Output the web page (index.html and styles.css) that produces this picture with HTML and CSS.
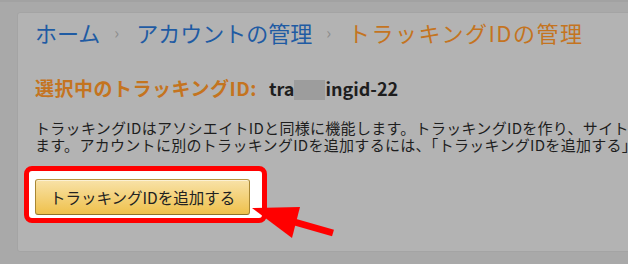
FILE: index.html
```html
<!DOCTYPE html>
<html lang="ja">
<head>
<meta charset="utf-8">
<title>トラッキングIDの管理</title>
<link rel="stylesheet" href="styles.css">
</head>
<body>
<div class="page">
  <div class="card">
    <nav class="crumbs">
      <a class="crumb link" href="#">ホーム</a>
      <span class="sep">›</span>
      <a class="crumb link" href="#">アカウントの管理</a>
      <span class="sep">›</span>
      <span class="crumb current">トラッキングIDの管理</span>
    </nav>
    <h2 class="selected">
      <span class="label">選択中のトラッキングID:</span>
      <span class="value">tra<span class="redact"></span>ingid-22</span>
    </h2>
    <p class="desc">トラッキングIDはアソシエイトIDと同様に機能します。トラッキングIDを作り、サイトやページごとのクリック数や売上を確認でき<br>ます。アカウントに別のトラッキングIDを追加するには、「トラッキングIDを追加する」をクリックしてください。</p>
    <div class="highlight">
      <button class="btn" type="button">トラッキングIDを追加する</button>
    </div>
  </div>
</div>
<svg class="arrow" width="628" height="264" viewBox="0 0 628 264">
  <line x1="284" y1="219" x2="333" y2="233" stroke="#ff0000" stroke-width="7"/>
  <polygon points="252,208 300,207 292,238" fill="#ff0000"/>
</svg>
</body>
</html>
```
FILE: styles.css
```css
html, body {
  margin: 0;
  padding: 0;
}
body {
  background: #a9a9a9;
  width: 628px;
  height: 264px;
  overflow: hidden;
  position: relative;
  font-family: "Noto Sans CJK JP", "Noto Sans", sans-serif;
  color: #1e1e1e;
}
.page {
  padding: 10px 0 0 17px;
  border-top: 2px solid #a2a2a2;
  box-sizing: border-box;
  height: 264px;
}
.card {
  width: 700px;
  height: 240px;
  box-sizing: border-box;
  background: #b3b3b3;
  border: 1px solid #a4a4a4;
  border-radius: 3px;
  padding: 4px 0 0 17px;
}
.crumbs {
  display: flex;
  align-items: center;
  height: 30px;
  font-size: 22px;
  white-space: nowrap;
}
.crumb {
  text-decoration: none;
  line-height: 30px;
}
.link {
  color: #1f5ba3;
}
.current {
  color: #c4741f;
  letter-spacing: 1.5px;
}
.sep {
  color: #8c8c8c;
  font-size: 16px;
  margin: 0 17px 0 14px;
}
.selected {
  margin: 29px 0 0;
  font-size: 19px;
  line-height: 24px;
  font-weight: bold;
  white-space: nowrap;
  display: flex;
  align-items: baseline;
  gap: 12px;
}
.label {
  color: #c4741f;
  letter-spacing: 0.5px;
}
.value {
  color: #1e1e1e;
  font-size: 18px;
}
.redact {
  display: inline-block;
  width: 31px;
  height: 20px;
  background: #9d9d9d;
  vertical-align: -4px;
}
.desc {
  margin: 19px 0 0;
  font-size: 15px;
  letter-spacing: 0.3px;
  line-height: 17px;
  white-space: nowrap;
  color: #1e1e1e;
}
.highlight {
  display: inline-block;
  margin: 13px 0 0 -11px;
  padding: 8px 12px 3px 6px;
  background: #ffffff;
  border: 5px solid #ff0000;
  border-radius: 8px;
}
.btn {
  display: block;
  height: 36px;
  padding: 0 14px;
  font-family: inherit;
  font-size: 15.5px;
  color: #222;
  background: linear-gradient(#f8e2a8, #efc14c);
  border: 1px solid;
  border-color: #b8963f #a88734 #8f722c;
  border-radius: 3px;
  box-shadow: inset 0 1px 0 rgba(255,255,255,0.5);
}
.arrow {
  position: absolute;
  left: 0;
  top: 0;
  pointer-events: none;
}
```
